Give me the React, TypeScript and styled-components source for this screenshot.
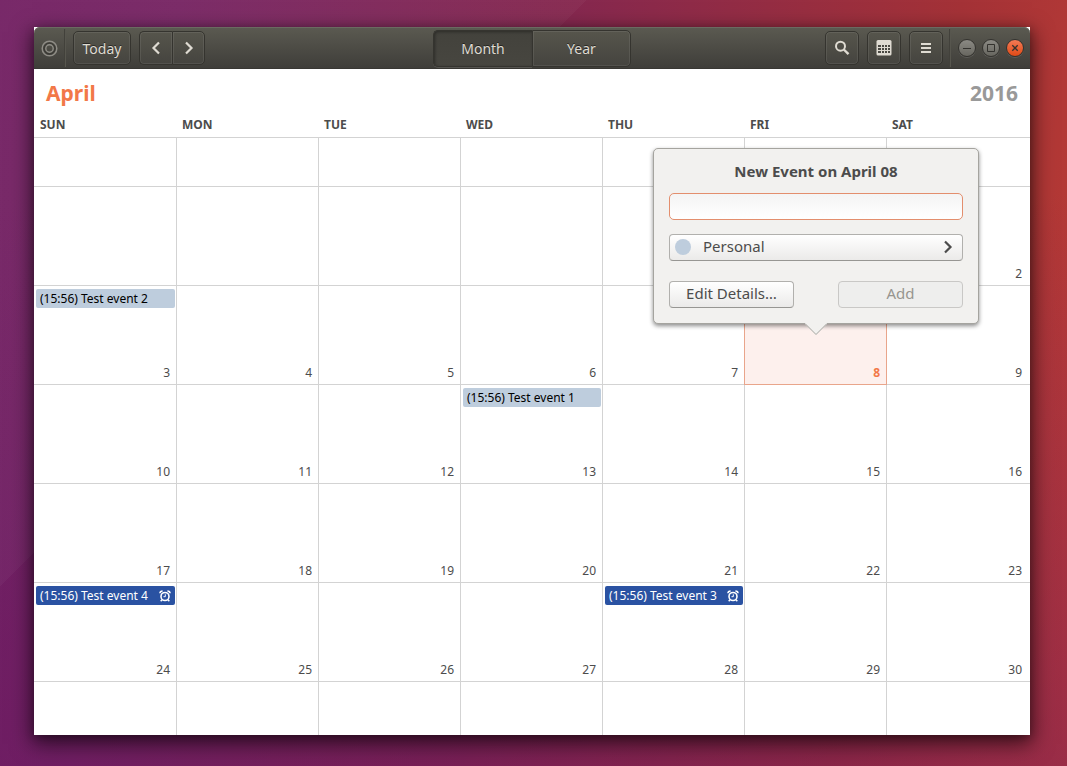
import React from "react";
import styled, { createGlobalStyle, css } from "styled-components";

const GlobalStyle = createGlobalStyle`
  *, *::before, *::after { box-sizing: border-box; }
  body {
    margin: 0;
    font-family: "Noto Sans", "Open Sans", sans-serif;
    font-size: 14px;
    color: #4c4c4c;
  }
  button, input { font: inherit; color: inherit; margin: 0; }
`;

const Desktop = styled.div`
  display: flex;
  min-height: 100vh;
  padding: 27px 37px 31px 34px;
  background:
    linear-gradient(135deg, rgba(255, 255, 255, 0.03) 32%, transparent 32%),
    linear-gradient(to top, rgba(98, 18, 98, 0.4), transparent 75%),
    linear-gradient(100deg, #742264 0%, #782664 15%, #86284f 48%, #a43237 80%, #bf3e35 100%);
`;

const Window = styled.main`
  flex: 1;
  display: flex;
  flex-direction: column;
  background: #fff;
  box-shadow: 0 7px 20px 2px rgba(0, 0, 0, 0.6), 0 2px 8px rgba(0, 0, 0, 0.25);
`;

const HeaderBar = styled.header`
  display: grid;
  grid-template-columns: 1fr auto 1fr;
  align-items: center;
  height: 42px;
  border-radius: 6px 6px 0 0;
  background: linear-gradient(#5b5a51, #3e3d39);
  box-shadow: inset 0 1px #6b6a61, inset 0 -1px #383733;
  color: #dfdbd2;
  text-shadow: 0 -1px rgba(0, 0, 0, 0.5);
`;

const HeaderSide = styled.div<{ $end?: boolean }>`
  display: flex;
  align-items: center;
  justify-content: ${(p) => (p.$end ? "flex-end" : "flex-start")};
  gap: 8px;
  padding: ${(p) => (p.$end ? "0 6px 0 0" : "0 0 0 7px")};
`;

const Separator = styled.span`
  width: 2px;
  height: 38px;
  margin: 0 -1px 0 -2px;
  border-left: 1px solid #42413b;
  border-right: 1px solid #57564e;
`;

const headerButton = css`
  display: flex;
  align-items: center;
  justify-content: center;
  padding: 0;
  border: 1px solid #35342f;
  background: linear-gradient(#56554c, #45443f);
  box-shadow: inset 0 0 0 1px rgba(255, 255, 255, 0.08);
  color: #dfdbd2;
  text-shadow: inherit;
`;

const HeaderButton = styled.button<{ $wide?: boolean }>`
  ${headerButton}
  width: ${(p) => (p.$wide ? 58 : 34)}px;
  height: 34px;
  border-radius: 5px;
`;

const Linked = styled.div`
  display: flex;
`;

const LinkedButton = styled.button<{ $active?: boolean; $tab?: boolean }>`
  ${headerButton}
  width: ${(p) => (p.$tab ? 99 : 33)}px;
  height: ${(p) => (p.$tab ? 37 : 34)}px;
  &:first-child { border-radius: 5px 0 0 5px; border-right: 0; }
  &:last-child { border-radius: 0 5px 5px 0; }
  ${(p) =>
    p.$active &&
    css`
      background: linear-gradient(#43423c, #474640);
      box-shadow: inset 1px 1px 3px rgba(0, 0, 0, 0.35), 0 1px rgba(255, 255, 255, 0.12);
    `}
`;

const WindowButton = styled.button<{ $close?: boolean }>`
  display: flex;
  align-items: center;
  justify-content: center;
  width: 18px;
  height: 18px;
  padding: 0;
  border: 1px solid #34332f;
  border-radius: 50%;
  background: ${(p) => (p.$close ? "linear-gradient(#f37a55, #df4a16)" : "linear-gradient(#8b8a84, #67665f)")};
  box-shadow: 0 1px rgba(255, 255, 255, 0.12);
  color: #33322e;
`;

const WindowControls = styled.div`
  display: flex;
  gap: 6px;
`;

const AppIcon = styled.svg`
  display: block;
`;

const Heading = styled.div`
  display: flex;
  justify-content: space-between;
  padding: 10px 12px 2px;
  line-height: 28px;
  font-size: 21px;
  font-weight: 700;
`;

const MonthName = styled.h1`
  margin: 0;
  font-size: inherit;
  color: #f27848;
`;

const YearName = styled.span`
  color: #999;
`;

const Calendar = styled.table`
  flex: 1;
  display: flex;
  flex-direction: column;
`;

const Columns = styled.tr`
  display: grid;
  grid-template-columns: repeat(6, minmax(0, 142fr)) minmax(0, 144fr);
`;

const WeekdayCell = styled.th`
  padding: 6px 6px 0;
  height: 28px;
  line-height: 20px;
  font-size: 12px;
  font-weight: 700;
  text-align: left;
`;

const Weeks = styled.tbody`
  flex: 1;
  display: grid;
  grid-template-rows: minmax(0, 49fr) repeat(5, minmax(0, 99fr)) minmax(0, 54fr);
`;

const DayCell = styled.td<{ $selected?: boolean }>`
  position: relative;
  display: flex;
  flex-direction: column;
  justify-content: space-between;
  padding: 3px 0 2px;
  border-top: 1px solid #d3d3d3;
  border-left: 1px solid #d3d3d3;
  font-size: 12px;
  &:first-child { border-left: 0; }
  &:last-child { padding-right: 2px; }
  ${(p) =>
    p.$selected &&
    css`
      z-index: 1;
      background: #fdf0ed;
      color: #f27848;
      font-weight: 700;
      &::after {
        content: "";
        position: absolute;
        inset: -1px;
        border: 1px solid #e9a58b;
      }
    `}
`;

const DayNumber = styled.span`
  margin-top: auto;
  padding-right: 6px;
  line-height: 18px;
  text-align: right;
`;

const EventButton = styled.button<{ $work?: boolean }>`
  display: flex;
  align-items: center;
  justify-content: space-between;
  height: 19px;
  margin: 0 1px 0 2px;
  padding: 0 4px;
  border: 0;
  border-radius: 2px;
  font-size: 12px;
  line-height: 19px;
  white-space: nowrap;
  background: ${(p) => (p.$work ? "#2a52a2" : "#becddd")};
  color: ${(p) => (p.$work ? "#fff" : "#000")};
`;

const Popover = styled.form`
  position: absolute;
  z-index: 2;
  left: calc(round(down, 50%, 1px) - 162px);
  bottom: calc(100% - 38px);
  width: 326px;
  padding: 11px 15px 15px;
  border: 1px solid #a5a49f;
  border-radius: 5px;
  background: #f2f1ef;
  box-shadow: 0 2px 4px rgba(0, 0, 0, 0.45);
  color: #4c4c4c;
  font-size: 15px;
  font-weight: 400;
`;

const PopoverArrow = styled.svg`
  position: absolute;
  top: 100%;
  left: calc(50% - 11px);
`;

const PopoverTitle = styled.label`
  display: block;
  margin-bottom: 11px;
  line-height: 22px;
  text-align: center;
  font-weight: 700;
`;

const TitleInput = styled.input`
  display: block;
  width: 100%;
  height: 27px;
  padding: 0 8px;
  border: 1px solid #e38e6d;
  border-radius: 5px;
  outline: 0;
  background: linear-gradient(#f4f4f4, #fff);
`;

const popoverButton = css`
  height: 27px;
  border: 1px solid #b1b0ad;
  border-bottom-color: #979693;
  border-radius: 4px;
  background: linear-gradient(#fff, #ebeae9);
  line-height: 23px;
`;

const CalendarPicker = styled.button`
  ${popoverButton}
  display: flex;
  align-items: center;
  gap: 12px;
  width: 100%;
  margin: 14px 0 20px;
  padding: 0 6px 2px 5px;
`;

const CalendarDot = styled.span`
  width: 16px;
  height: 16px;
  border-radius: 50%;
  background: #becddd;
`;

const PickerName = styled.span`
  flex: 1;
  text-align: left;
`;

const Actions = styled.div`
  display: flex;
  justify-content: space-between;
`;

const ActionButton = styled.button`
  ${popoverButton}
  width: 125px;
  padding: 0 0 2px;
  &:disabled {
    border-color: #c9c8c6;
    background: #eeeeed;
    color: #97958f;
  }
`;

const Chevron = ({ left }: { left?: boolean }) => (
  <svg width="16" height="16" viewBox="0 0 16 16" fill="none" stroke="currentColor" strokeWidth="2.2">
    <path d={left ? "M11 2.5 5.5 8 11 13.5" : "M5 2.5 10.500 8 5 13.5"} />
  </svg>
);

const SearchIcon = () => (
  <svg width="16" height="16" viewBox="0 0 16 16" fill="none" stroke="currentColor">
    <circle cx="6.500" cy="6.200" r="4.500" strokeWidth="2" />
    <path d="m9.800 9.500 4.700 4.700" strokeWidth="2.400" />
  </svg>
);

const CalendarIcon = () => (
  <svg width="16" height="16" viewBox="0 0 16 16">
    <rect x="0.500" y="0" width="15" height="15.500" rx="1.500" fill="currentColor" />
    <path
      d="M2 5h3v2H2zM6 5h2v2H6zM9 5h2v2H9zM12 5h2v2h-2zM2 8h3v2H2zM6 8h2v2H6zM9 8h2v2H9zM12 8h2v2h-2zM2 11h3v2H2zM6 11h2v2H6zM9 11h2v2H9zM12 11h2v2h-2z"
      fill="#4a4943"
    />
  </svg>
);

const MenuIcon = () => (
  <svg width="16" height="16" viewBox="0 0 16 16" fill="currentColor">
    <path d="M3 3h10v2H3zM3 7h10v2H3zM3 11h10v2H3z" />
  </svg>
);

const AlarmIcon = () => (
  <svg width="12" height="12" viewBox="0 0 12 12" fill="none" stroke="currentColor">
    <circle cx="6" cy="6.500" r="4" strokeWidth="1.600" />
    <path d="M6.300 4.300v2.400H4.500" strokeWidth="1" />
    <path d="M.9 3.200C1 1.600 2 .9 3.600.9M11.100 3.200C11 1.600 10 .9 8.400.9" strokeWidth="1.500" />
    <path d="m3 9.800-1.300 1.500M9 9.800l1.300 1.500" strokeWidth="1.500" />
  </svg>
);

const WEEKDAYS = ["SUN", "MON", "TUE", "WED", "THU", "FRI", "SAT"];
const FIRST_DAY_CELL = 12;
const DAYS_IN_MONTH = 30;
const SELECTED_DAY = 8;

const EVENTS: Record<number, { title: string; work?: boolean }> = {
  3: { title: "(15:56) Test event 2" },
  13: { title: "(15:56) Test event 1" },
  24: { title: "(15:56) Test event 4", work: true },
  28: { title: "(15:56) Test event 3", work: true },
};

const NewEventPopover = () => (
  <Popover onSubmit={(e) => e.preventDefault()}>
    <PopoverTitle htmlFor="event-title">New Event on April 08</PopoverTitle>
    <TitleInput id="event-title" type="text" />
    <CalendarPicker type="button">
      <CalendarDot />
      <PickerName>Personal</PickerName>
      <Chevron />
    </CalendarPicker>
    <Actions>
      <ActionButton type="button">Edit Details…</ActionButton>
      <ActionButton type="submit" disabled>
        Add
      </ActionButton>
    </Actions>
    <PopoverArrow width="22" height="13" viewBox="0 0 22 13">
      <path d="M0 0h22v1L11 12 0 1z" fill="#f2f1ef" />
      <path d="M0 .5 11 11.500 22 .5" fill="none" stroke="#a5a49f" />
    </PopoverArrow>
  </Popover>
);

const Day = ({ day }: { day: number }) => {
  const inMonth = day >= 1 && day <= DAYS_IN_MONTH;
  const event = EVENTS[day];
  const selected = day === SELECTED_DAY;
  return (
    <DayCell $selected={selected}>
      {event && (
        <EventButton $work={event.work}>
          {event.title}
          {event.work && <AlarmIcon />}
        </EventButton>
      )}
      {inMonth && <DayNumber>{day}</DayNumber>}
      {selected && <NewEventPopover />}
    </DayCell>
  );
};

export default function App() {
  return (
    <>
      <GlobalStyle />
      <Desktop>
        <Window>
          <HeaderBar>
            <HeaderSide>
              <AppIcon width="17" height="17" viewBox="0 0 17 17" fill="none" stroke="#8f8d86">
                <circle cx="8.500" cy="8.500" r="7.300" strokeWidth="1.500" />
                <circle cx="8.500" cy="8.500" r="5.500" stroke="#34332f" />
                <circle cx="8.500" cy="8.500" r="3.700" strokeWidth="1.400" />
              </AppIcon>
              <Separator />
              <HeaderButton $wide>Today</HeaderButton>
              <Linked>
                <LinkedButton aria-label="Previous month">
                  <Chevron left />
                </LinkedButton>
                <LinkedButton aria-label="Next month">
                  <Chevron />
                </LinkedButton>
              </Linked>
            </HeaderSide>
            <Linked>
              <LinkedButton $tab $active>
                Month
              </LinkedButton>
              <LinkedButton $tab>Year</LinkedButton>
            </Linked>
            <HeaderSide $end>
              <HeaderButton aria-label="Search">
                <SearchIcon />
              </HeaderButton>
              <HeaderButton aria-label="Calendars">
                <CalendarIcon />
              </HeaderButton>
              <HeaderButton aria-label="Menu">
                <MenuIcon />
              </HeaderButton>
              <Separator />
              <WindowControls>
                <WindowButton aria-label="Minimize">
                  <svg width="10" height="10" stroke="currentColor">
                    <path d="M1 5.500h8" />
                  </svg>
                </WindowButton>
                <WindowButton aria-label="Maximize">
                  <svg width="10" height="10" fill="none" stroke="currentColor">
                    <path d="M1.500 1.500h7v7h-7z" />
                  </svg>
                </WindowButton>
                <WindowButton aria-label="Close" $close>
                  <svg width="10" height="10" stroke="currentColor" strokeWidth="1.300">
                    <path d="m2.300 2.300 5.400 5.400M7.700 2.300 2.300 7.700" />
                  </svg>
                </WindowButton>
              </WindowControls>
            </HeaderSide>
          </HeaderBar>
          <Heading>
            <MonthName>April</MonthName>
            <YearName>2016</YearName>
          </Heading>
          <Calendar>
            <thead>
              <Columns>
                {WEEKDAYS.map((name) => (
                  <WeekdayCell key={name} scope="col">
                    {name}
                  </WeekdayCell>
                ))}
              </Columns>
            </thead>
            <Weeks>
              {Array.from({ length: 7 }, (_, week) => (
                <Columns key={week}>
                  {WEEKDAYS.map((name, i) => (
                    <Day key={name} day={week * 7 + i - FIRST_DAY_CELL + 1} />
                  ))}
                </Columns>
              ))}
            </Weeks>
          </Calendar>
        </Window>
      </Desktop>
    </>
  );
}
